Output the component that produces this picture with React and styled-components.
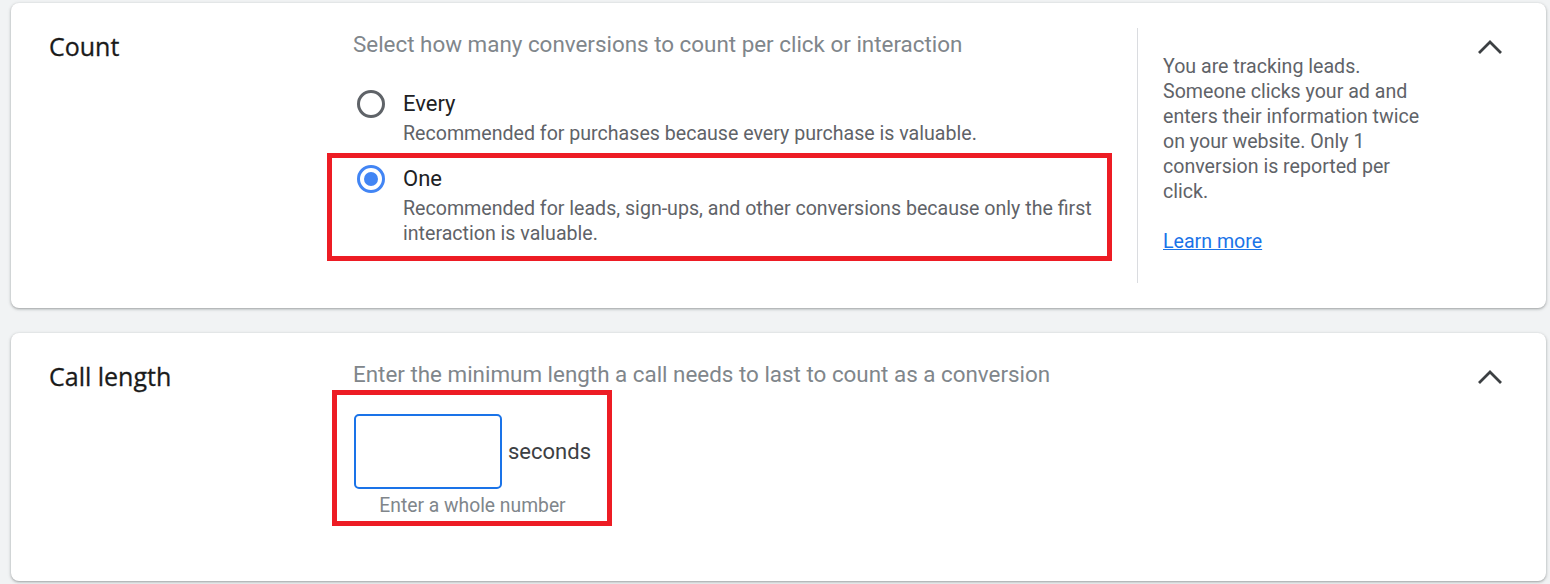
import React from "react";
import styled, { createGlobalStyle } from "styled-components";

const GlobalStyle = createGlobalStyle`
	body {
		margin: 0;
		background: #f1f3f4;
		font-family: Roboto, "Liberation Sans", sans-serif;
		color: #202124;
	}
`;

function ChevronUp() {
	return (
		<svg width="28" height="18" viewBox="0 0 28 18">
			<path d="M3 15 L14 4 L25 15" fill="none" stroke="#3c4043" strokeWidth="2.8" />
		</svg>
	);
}

function Radio({ checked }) {
	return (
		<RadioBox>
			<RadioCircle $checked={checked}>{checked && <RadioDot />}</RadioCircle>
		</RadioBox>
	);
}

function App() {
	return (
		<>
			<GlobalStyle />
			<Page>
				<Card>
					<Title>Count</Title>
					<Main>
						<Description>Select how many conversions to count per click or interaction</Description>
						<Options>
							<Option>
								<Radio />
								<OptionText>
									<OptionLabel>Every</OptionLabel>
									<OptionHint>Recommended for purchases because every purchase is valuable.</OptionHint>
								</OptionText>
							</Option>
							<OptionHighlight>
								<Option>
									<Radio checked />
									<OptionText>
										<OptionLabel>One</OptionLabel>
										<OptionHint>
											Recommended for leads, sign-ups, and other conversions because only the first
											<br />
											interaction is valuable.
										</OptionHint>
									</OptionText>
								</Option>
							</OptionHighlight>
						</Options>
					</Main>
					<Aside>
						<HelpText>
							You are tracking leads.
							<br />
							Someone clicks your ad and
							<br />
							enters their information twice
							<br />
							on your website. Only 1
							<br />
							conversion is reported per
							<br />
							click.
						</HelpText>
						<LearnMore href="#">Learn more</LearnMore>
					</Aside>
					<Toggle>
						<ChevronUp />
					</Toggle>
				</Card>

				<Card $short>
					<Title>Call length</Title>
					<Main>
						<Description>Enter the minimum length a call needs to last to count as a conversion</Description>
						<FieldHighlight>
							<FieldRow>
								<NumberInput type="text" />
								<Unit>seconds</Unit>
							</FieldRow>
							<FieldHint>Enter a whole number</FieldHint>
						</FieldHighlight>
					</Main>
					<Toggle>
						<ChevronUp />
					</Toggle>
				</Card>
			</Page>
		</>
	);
}

// * ====================== STYLES ======================
const Page = styled.div`
	display: flex;
	flex-direction: column;
	gap: 25px;
	padding: 3px 4px 3px 11px;
`;

const Card = styled.section`
	display: flex;
	background: #fff;
	border-radius: 8px;
	box-shadow: 0 1px 2px rgba(60, 64, 67, 0.3), 0 1px 3px 1px rgba(60, 64, 67, 0.15);
	height: ${(p) => (p.$short ? "248px" : "305px")};
	box-sizing: border-box;
	padding: 25px 0 25px 38px;
`;

const Title = styled.h2`
	margin: 0;
	width: 304px;
	flex-shrink: 0;
	font-family: "Open Sans", sans-serif;
	font-weight: 500;
	font-size: 25px;
	line-height: 37px;
	color: #1a1a1a;
	-webkit-text-stroke: 0.3px #1a1a1a;
`;

const Main = styled.div`
	width: 784px;
	flex-shrink: 0;
	display: flex;
	flex-direction: column;
	align-items: flex-start;
`;

const Description = styled.p`
	margin: 0;
	font-size: 22.4px;
	line-height: 32px;
	color: #80868b;
	white-space: nowrap;
`;

const Options = styled.div`
	display: flex;
	flex-direction: column;
	margin-top: 30px;
`;

const Option = styled.label`
	display: flex;
	gap: 14px;
`;

const OptionHighlight = styled.div`
	margin: 7px 0 0 -26px;
	width: 785px;
	box-sizing: border-box;
	border: 5px solid #ed1c24;
	padding: 7px 0 10px 21px;
`;

const RadioBox = styled.span`
	width: 36px;
	height: 28px;
	display: flex;
	align-items: center;
	justify-content: center;
	flex-shrink: 0;
`;

const RadioCircle = styled.span`
	width: 28px;
	height: 28px;
	box-sizing: border-box;
	border-radius: 50%;
	border: 3px solid ${(p) => (p.$checked ? "#4285f4" : "#5f6368")};
	display: flex;
	align-items: center;
	justify-content: center;
`;

const RadioDot = styled.span`
	width: 14px;
	height: 14px;
	border-radius: 50%;
	background: #4285f4;
`;

const OptionText = styled.div`
	display: flex;
	flex-direction: column;
`;

const OptionLabel = styled.span`
	font-size: 22px;
	line-height: 28px;
	color: #202124;
`;

const OptionHint = styled.span`
	margin-top: 3px;
	font-size: 19.6px;
	line-height: 25px;
	color: #5f6368;
	white-space: nowrap;
`;

const Aside = styled.aside`
	border-left: 1px solid #dadce0;
	padding: 26px 0 0 25px;
	width: 300px;
	box-sizing: border-box;
	display: flex;
	flex-direction: column;
	gap: 25px;
`;

const HelpText = styled.p`
	margin: 0;
	font-size: 19.6px;
	line-height: 25px;
	color: #5f6368;
	white-space: nowrap;
`;

const LearnMore = styled.a`
	font-size: 19.6px;
	line-height: 25px;
	color: #1a73e8;
	text-decoration: underline;
	align-self: flex-start;
`;

const Toggle = styled.button`
	margin-left: auto;
	margin-right: 42px;
	margin-top: 5px;
	align-self: flex-start;
	border: 0;
	background: none;
	padding: 0;
	width: 28px;
	height: 28px;
	display: flex;
	align-items: center;
	justify-content: center;
`;

const FieldHighlight = styled.div`
	margin: 0 0 0 -21px;
	border: 5px solid #ed1c24;
	padding: 19px 16px 5px 17px;
	display: flex;
	flex-direction: column;
	align-items: center;
`;

const FieldRow = styled.div`
	display: flex;
	align-items: center;
	gap: 6px;
`;

const NumberInput = styled.input`
	width: 148px;
	height: 75px;
	box-sizing: border-box;
	border: 2px solid #1a73e8;
	border-radius: 5px;
	outline: none;
	font-size: 18px;
	padding: 0 10px;
`;

const Unit = styled.span`
	font-size: 22px;
	color: #3c4043;
`;

const FieldHint = styled.span`
	margin-top: 7px;
	font-size: 19.3px;
	line-height: 20px;
	color: #80868b;
`;

export default App;
